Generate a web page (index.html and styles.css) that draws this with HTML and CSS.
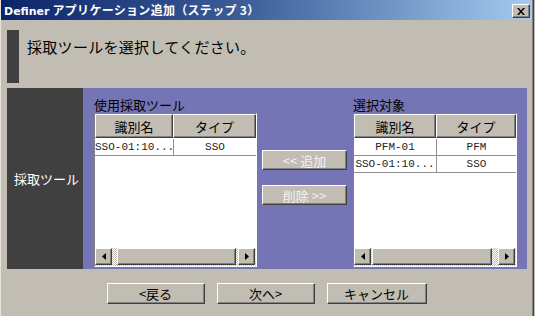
FILE: index.html
```html
<!DOCTYPE html>
<html lang="ja">
<head>
<meta charset="utf-8">
<title>Definer アプリケーション追加</title>
<link rel="stylesheet" href="styles.css">
</head>
<body>
<div class="win">
  <div class="titlebar">
    <div class="title"><span class="lat">Definer</span> アプリケーション追加（ステップ 3）</div>
    <div class="close">
      <svg width="8" height="7" viewBox="0 0 8 7"><path d="M0 0h2l2 2.5L6 0h2L5 3.5 8 7H6L4 4.5 2 7H0l3-3.5z" fill="#000"/></svg>
    </div>
  </div>
  <div class="content">
    <div class="prompt">
      <div class="mark"></div>
      <p class="prompt-text">採取ツールを選択してください。</p>
    </div>
    <div class="panel">
      <div class="side">採取ツール</div>
      <div class="area">
        <div class="group group-left">
          <div class="label">使用採取ツール</div>
          <div class="table">
            <div class="row head">
              <div class="hcell">識別名</div>
              <div class="hcell">タイプ</div>
            </div>
            <div class="rows">
              <div class="row data">
                <div class="cell">SSO-01:10...</div>
                <div class="cell">SSO</div>
              </div>
            </div>
            <div class="scroll">
              <div class="arrow"><svg width="4" height="7" viewBox="0 0 4 7"><path d="M4 0v7L0 3.5z" fill="#000"/></svg></div>
              <div class="thumb thumb-left"></div>
              <div class="arrow"><svg width="4" height="7" viewBox="0 0 4 7"><path d="M0 0v7L4 3.5z" fill="#000"/></svg></div>
            </div>
          </div>
        </div>
        <div class="moves">
          <div class="btn move">&lt;&lt; 追加</div>
          <div class="btn move">削除 &gt;&gt;</div>
        </div>
        <div class="group group-right">
          <div class="label">選択対象</div>
          <div class="table">
            <div class="row head">
              <div class="hcell">識別名</div>
              <div class="hcell">タイプ</div>
            </div>
            <div class="rows">
              <div class="row data">
                <div class="cell">PFM-01</div>
                <div class="cell">PFM</div>
              </div>
              <div class="row data">
                <div class="cell">SSO-01:10...</div>
                <div class="cell">SSO</div>
              </div>
            </div>
            <div class="scroll">
              <div class="arrow"><svg width="4" height="7" viewBox="0 0 4 7"><path d="M4 0v7L0 3.5z" fill="#000"/></svg></div>
              <div class="thumb thumb-right"></div>
              <div class="arrow"><svg width="4" height="7" viewBox="0 0 4 7"><path d="M0 0v7L4 3.5z" fill="#000"/></svg></div>
            </div>
          </div>
        </div>
      </div>
    </div>
    <div class="actions">
      <div class="btn action">&lt;戻る</div>
      <div class="btn action">次へ&gt;</div>
      <div class="btn action wide">キャンセル</div>
    </div>
  </div>
</div>
</body>
</html>
```

FILE: styles.css
```css
* { box-sizing: border-box; }

body {
  margin: 0;
  background: #c1bdb2;
  font-family: "Noto Sans CJK JP", "Noto Sans", sans-serif;
  color: #000;
}

.win {
  width: 534px;
  height: 316px;
  display: flex;
  flex-direction: column;
  border-left: 1px solid #e6e3dc;
  border-right: 1px solid #404040;
  box-shadow: inset -1px 0 #808080;
}

.titlebar {
  height: 20px;
  margin-right: 1px;
  display: flex;
  align-items: center;
  justify-content: space-between;
  background: linear-gradient(to right, #0a246a, #3c5c98 45%, #a6caf0);
  padding: 0 2px 0 3px;
}

.title {
  color: #fff;
  font-weight: bold;
  font-size: 12px;
  line-height: 16px;
  letter-spacing: 0.3px;
  padding-top: 1px;
  white-space: nowrap;
}

.title .lat {
  font-family: "DejaVu Sans", sans-serif;
  font-size: 11px;
  letter-spacing: 0;
}

.close {
  width: 18px;
  height: 14px;
  margin-top: 2px;
  background: #c1bdb2;
  border: 1px solid;
  border-color: #fff #404040 #404040 #fff;
  box-shadow: inset -1px -1px #808080;
  display: flex;
  align-items: center;
  justify-content: center;
}

.content {
  flex: 1;
  display: flex;
  flex-direction: column;
  padding: 10px 6px 0 6px;
}

.prompt {
  height: 53px;
  display: flex;
}

.mark {
  width: 12px;
  background: #404040;
}

.prompt-text {
  margin: 0 0 0 8px;
  padding-top: 7px;
  font-size: 15px;
  line-height: 20px;
  letter-spacing: 0.3px;
}

.panel {
  margin-top: 5px;
  height: 181px;
  display: flex;
}

.side {
  width: 76px;
  background: #404040;
  color: #fff;
  font-size: 13px;
  display: flex;
  align-items: center;
  justify-content: center;
  padding-left: 3px;
}

.area {
  flex: 1;
  background: #7575b5;
  display: flex;
  padding: 0 9px 2px 11px;
}

.group {
  display: flex;
  flex-direction: column;
}

.group-left { width: 163px; }
.group-right { width: 164px; margin-left: 6px; }

.label {
  height: 25px;
  padding-top: 8px;
  font-size: 13px;
  line-height: 17px;
  white-space: nowrap;
}

.table {
  flex: 1;
  display: flex;
  flex-direction: column;
  background: #fff;
  border: 1px solid;
  border-color: #808080 #fff #fff #808080;
}

.row {
  display: grid;
}

.group-left .row { grid-template-columns: 78px 1fr; }
.group-right .row { grid-template-columns: 82px 1fr; }

.head { height: 24px; }

.hcell {
  background: #c1bdb2;
  border: 1px solid;
  border-color: #fff #404040 #404040 #fff;
  box-shadow: inset -1px -1px #808080;
  font-size: 13px;
  display: flex;
  align-items: center;
  justify-content: center;
}

.rows {
  flex: 1;
  padding-top: 1px;
}

.data {
  height: 17px;
  border-bottom: 1px solid #909090;
}

.cell {
  font-family: "Liberation Mono", monospace;
  font-size: 11px;
  line-height: 16px;
  text-align: center;
  white-space: nowrap;
  overflow: hidden;
  color: #222;
}

.cell + .cell { border-left: 1px solid #909090; }

.scroll {
  height: 18px;
  display: flex;
  padding: 0 1px 1px 0;
  background: repeating-conic-gradient(#c1bdb2 0 25%, #fff 0 50%) 0 0 / 2px 2px;
}

.arrow, .thumb {
  background: #c1bdb2;
  border: 1px solid;
  border-color: #fff #404040 #404040 #fff;
  box-shadow: inset -1px -1px #808080;
}

.arrow {
  width: 17px;
  display: flex;
  align-items: center;
  justify-content: center;
}

.thumb { flex: 1; }
.thumb-left { margin: 0 2px 0 5px; }
.thumb-right { margin: 0 6px 0 1px; }

.btn {
  background: #c1bdb2;
  border: 1px solid;
  border-color: #fff #404040 #404040 #fff;
  box-shadow: inset -1px -1px #808080;
  font-size: 13px;
  display: flex;
  align-items: center;
  justify-content: center;
  white-space: nowrap;
}

.moves {
  width: 85px;
  margin-left: 5px;
  padding-top: 62px;
  display: flex;
  flex-direction: column;
  gap: 15px;
}

.move {
  height: 20px;
  color: #f2f2f2;
}

.actions {
  margin-top: 14px;
  display: flex;
  justify-content: center;
  gap: 12px;
  padding-right: 1px;
}

.action {
  width: 98px;
  height: 21px;
}

.action.wide { width: 100px; }
```
